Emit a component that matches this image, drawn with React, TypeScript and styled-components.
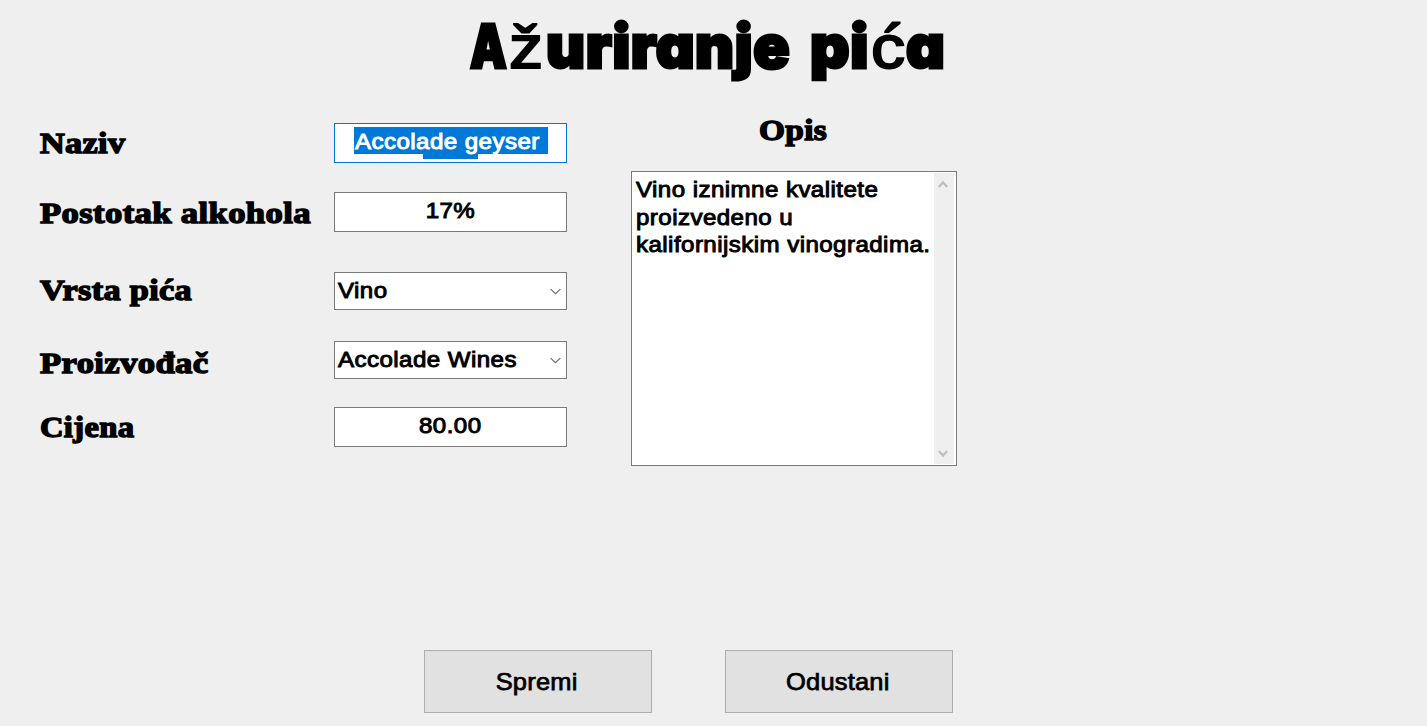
import React from "react";
import styled, { createGlobalStyle } from "styled-components";

const GlobalStyle = createGlobalStyle`
  * { box-sizing: border-box; }
  body { margin: 0; background: #efefef; color: #000; overflow: hidden; }
`;

const Window = styled.main`
  width: 1427px;
  height: 726px;
  display: flex;
  flex-direction: column;
  background: #efefef;
  font-family: "Liberation Sans", Arial, sans-serif;
`;

const Title = styled.h1`
  margin: 0;
  height: 112px;
  padding: 8px 0 0 470px;
  display: flex;
  align-items: baseline;
  font: 900 60px/76px Inter, "Liberation Sans", sans-serif;
  font-feature-settings: "cv11" 1;
  letter-spacing: 0.7px;
  -webkit-text-stroke: 3px #000;
  white-space: pre;
`;

const Part = styled.span<{ $width: number; $stretch?: number }>`
  display: block;
  flex: none;
  width: ${({ $width }) => $width}px;
  transform: scaleX(${({ $stretch = 1 }) => $stretch});
  transform-origin: left;
`;

const Accented = styled(Part)`
  font: 400 62px/76px "Liberation Sans", Arial, sans-serif;
  letter-spacing: 0;
  -webkit-text-stroke: 2px #000;
`;

const Form = styled.form`
  display: flex;
  height: 538px;
  padding-left: 40px;
`;

const LabelColumn = styled.div`
  width: 294px;
  padding-top: 14px;
`;

const Label = styled.label<{ $gap?: number; $stretch?: number }>`
  display: block;
  width: max-content;
  margin-bottom: ${({ $gap = 0 }) => $gap}px;
  font: 700 29.5px/34px "Liberation Serif", "Times New Roman", serif;
  letter-spacing: 0.3px;
  -webkit-text-stroke: 1.4px #000;
  white-space: nowrap;
  transform: scaleX(${({ $stretch = 1.175 }) => $stretch});
  transform-origin: left;
`;

const FieldColumn = styled.div`
  width: 233px;
  padding-top: 11px;
`;

const Value = styled.span<{ $align?: string }>`
  display: block;
  font-size: 21.8px;
  line-height: 27.5px;
  letter-spacing: 0.4px;
  -webkit-text-stroke: 0.95px;
  white-space: pre;
  transform: scaleX(1.105);
  transform-origin: ${({ $align = "center" }) => $align};
`;

const Field = styled.div<{ $gap?: number; $focused?: boolean }>`
  height: 40px;
  margin-bottom: ${({ $gap = 0 }) => $gap}px;
  padding-top: ${({ $focused }) => ($focused ? 3 : 4)}px;
  border: 1px solid ${({ $focused }) => ($focused ? "#0078d7" : "#7a7a7a")};
  background: #fff;
  display: flex;
  flex-direction: column;
  align-items: center;
`;

const Selection = styled.div`
  width: 194px;
  height: 27px;
  flex: none;
  padding: 1px 0 0 1px;
  background: #0078d7;
  color: #fff;
`;

const SelectionTail = styled.span`
  width: 55px;
  height: 5px;
  background: #0078d7;
`;

const Select = styled.div<{ $gap?: number }>`
  height: 38px;
  margin-bottom: ${({ $gap = 0 }) => $gap}px;
  padding: 0 5px 0 3px;
  border: 1px solid #7a7a7a;
  background: #fff;
  display: flex;
  align-items: center;
  justify-content: space-between;
`;

const Description = styled.section`
  width: 326px;
  margin-left: 64px;
  display: flex;
  flex-direction: column;
`;

const Caption = styled.div`
  height: 59px;
  padding: 1px 0 0 128px;
`;

const TextArea = styled.div`
  height: 295px;
  padding: 1px 2px 1px 4px;
  border: 1px solid #7a7a7a;
  background: #fff;
  display: flex;
  justify-content: space-between;
`;

const Text = styled(Value)`
  width: 250px;
  padding-top: 3px;
`;

const ScrollBar = styled.div`
  width: 20px;
  flex: none;
  padding: 7px 0 6px 4px;
  background: #efefef;
  display: flex;
  flex-direction: column;
  justify-content: space-between;
`;

const Actions = styled.footer`
  display: flex;
  gap: 73px;
  padding-left: 424px;
`;

const Button = styled.button`
  width: 228px;
  height: 63px;
  padding: 1px 2px 0 0;
  border: 1px solid #adadad;
  background: #e1e1e1;
  color: #000;
`;

const ButtonText = styled.span`
  display: inline-block;
  font: 24px/30px "Liberation Sans", Arial, sans-serif;
  letter-spacing: 0.2px;
  -webkit-text-stroke: 0.75px #000;
  transform: scaleX(1.06);
`;

const Arrow = () => (
  <svg width="11" height="8" viewBox="0 0 11 8" fill="none" stroke="#707070" strokeWidth="1.3">
    <path d="M.6 2.1 5.5 6.7 10.4 2.1" />
  </svg>
);

const ScrollArrow = ({ up }: { up?: boolean }) => (
  <svg width="10" height="9" viewBox="0 0 10 9" fill="none" stroke="#bfbfbf" strokeWidth="2.2">
    <path d={up ? "M.8 7 5 2.4 9.2 7" : "M.8 2 5 6.6 9.2 2"} />
  </svg>
);

export default function App() {
  return (
    <Window>
      <GlobalStyle />
      <Title>
        <Part $width={39} $stretch={0.77}>A</Part>
        <Accented $width={37} $stretch={1.1}>ž</Accented>
        <Part $width={264}>uriranje </Part>
        <Part $width={61} $stretch={1.02}>pi</Part>
        <Accented $width={35} $stretch={1.1}>ć</Accented>
        <Part $width={40}>a</Part>
      </Title>
      <Form>
        <LabelColumn>
          <Label $gap={36} $stretch={1.16}>Naziv</Label>
          <Label $gap={43}>Postotak alkohola</Label>
          <Label $gap={39} $stretch={1.16}>Vrsta pića</Label>
          <Label $gap={30}>Proizvođač</Label>
          <Label $stretch={1.105}>Cijena</Label>
        </LabelColumn>
        <FieldColumn>
          <Field $gap={29} $focused>
            <Selection>
              <Value $align="left">Accolade geyser </Value>
            </Selection>
            <SelectionTail />
          </Field>
          <Field $gap={40}>
            <Value>17%</Value>
          </Field>
          <Select $gap={31}>
            <Value $align="left">Vino</Value>
            <Arrow />
          </Select>
          <Select $gap={28}>
            <Value $align="left">Accolade Wines</Value>
            <Arrow />
          </Select>
          <Field>
            <Value>80.00</Value>
          </Field>
        </FieldColumn>
        <Description>
          <Caption>
            <Label $stretch={1.13}>Opis</Label>
          </Caption>
          <TextArea>
            <Text $align="left">{"Vino iznimne kvalitete\nproizvedeno u\nkalifornijskim vinogradima."}</Text>
            <ScrollBar>
              <ScrollArrow up />
              <ScrollArrow />
            </ScrollBar>
          </TextArea>
        </Description>
      </Form>
      <Actions>
        <Button type="button">
          <ButtonText>Spremi</ButtonText>
        </Button>
        <Button type="button">
          <ButtonText>Odustani</ButtonText>
        </Button>
      </Actions>
    </Window>
  );
}
